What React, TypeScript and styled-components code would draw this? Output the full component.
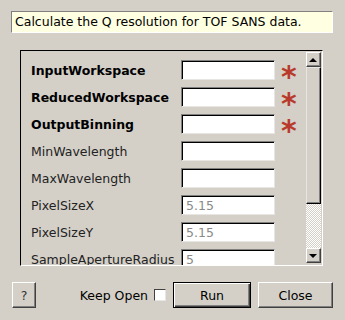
import styled, { createGlobalStyle } from "styled-components";

const Global = createGlobalStyle`
  body {
    margin: 0;
    background: #d4d0c8;
    font-family: "DejaVu Sans", "Liberation Sans", sans-serif;
    font-size: 12.5px;
    color: #000;
  }
`

const Dialog = styled.div`
  width: 345px;
  height: 320px;
  box-sizing: border-box;
  padding: 11px 12px 0 11px;
  display: flex;
  flex-direction: column;
`

const Description = styled.div`
  height: 22px;
  box-sizing: border-box;
  background: #ffffe1;
  border: 1px solid;
  border-color: #808080 #fff #fff #808080;
  padding: 2px 0 0 3px;
  line-height: 16px;
  white-space: nowrap;
`

const Frame = styled.div`
  margin: 17px 10px 0 9px;
  height: 216px;
  box-sizing: border-box;
  border: 1px solid;
  border-color: #000 #fff #fff #000;
  display: flex;
  overflow: hidden;
`

const Rows = styled.div`
  flex: 1;
  padding: 9px 0 0 10px;
  display: flex;
  flex-direction: column;
  gap: 7px;
`

const Row = styled.div`
  display: flex;
  align-items: center;
  height: 20px;
  flex-shrink: 0;
`

const Label = styled.span<{ $required?: boolean }>`
  width: 150px;
  font-weight: ${p => (p.$required ? "bold" : "normal")};
  color: ${p => (p.$required ? "#000" : "#222")};
  white-space: nowrap;
`

const Input = styled.div`
  width: 94px;
  height: 20px;
  box-sizing: border-box;
  background: #fff;
  border: 1px solid;
  border-color: #808080 #e8e6e2 #e8e6e2 #808080;
  box-shadow: inset 1px 1px 0 #000;
  color: #8a8a8a;
  padding: 1px 0 0 4px;
  line-height: 17px;
`

const Star = styled.span`
  width: 17px;
  margin-left: 6px;
  height: 20px;
  color: #b83a2b;
  font-weight: bold;
  font-size: 30px;
  line-height: 20px;
  padding-top: 7px;
  box-sizing: border-box;
`

const Scrollbar = styled.div`
  width: 15px;
  margin: 1px 1px 2px 0;
  display: flex;
  flex-direction: column;
`

const ScrollButton = styled.div`
  height: 15px;
  box-sizing: border-box;
  background: #d4d0c8;
  border: 1px solid;
  border-color: #fff #404040 #404040 #fff;
  box-shadow: inset -1px -1px 0 #808080;
  display: flex;
  align-items: center;
  justify-content: center;
`

const Arrow = styled.span<{ $down?: boolean }>`
  width: 0;
  height: 0;
  border-left: 4px solid transparent;
  border-right: 4px solid transparent;
  border-bottom: ${p => (p.$down ? "none" : "4px solid #000")};
  border-top: ${p => (p.$down ? "4px solid #000" : "none")};
  margin-right: 1px;
`

const Thumb = styled.div`
  height: 137px;
  box-sizing: border-box;
  border: 1px solid;
  border-color: #e8e6e2 #000 #000 #e8e6e2;
  box-shadow: inset -1px -1px 0 #808080;
`

const Trough = styled.div`
  flex: 1;
  background: repeating-conic-gradient(#d4d0c8 0 25%, #fff 0 50%) 0 0 / 2px 2px;
`

const Footer = styled.div`
  margin-top: 16px;
  display: flex;
  align-items: center;
  height: 26px;
`

const Button = styled.button<{ $default?: boolean; $width: number }>`
  width: ${p => p.$width}px;
  height: 26px;
  box-sizing: border-box;
  background: #d4d0c8;
  font-family: inherit;
  font-size: 12.5px;
  color: #000;
  padding: 0;
  border: 1px solid;
  border-color: ${p => (p.$default ? "#000" : "#fff #404040 #404040 #fff")};
  box-shadow: ${p =>
    p.$default
      ? "inset 1px 1px 0 #fff, inset -1px -1px 0 #404040, inset -2px -2px 0 #808080"
      : "inset -1px -1px 0 #808080"};
`

const HelpButton = styled(Button)`
  margin-left: 1px;
  color: #333;
`

const CloseButton = styled(Button)`
  margin-left: 7px;
`

const KeepOpen = styled.label`
  margin-left: auto;
  display: flex;
  align-items: center;
  gap: 6px;
  margin-right: 7px;
`

const Check = styled.span`
  width: 12px;
  height: 12px;
  box-sizing: border-box;
  background: #fff;
  border: 1px solid;
  border-color: #404040 #e8e6e2 #e8e6e2 #404040;
`

const fields = [
  { name: "InputWorkspace", required: true },
  { name: "ReducedWorkspace", required: true },
  { name: "OutputBinning", required: true },
  { name: "MinWavelength" },
  { name: "MaxWavelength" },
  { name: "PixelSizeX", value: "5.15" },
  { name: "PixelSizeY", value: "5.15" },
  { name: "SampleApertureRadius", value: "5" },
]

export default function App(): JSX.Element {
  return (
    <Dialog>
      <Global />
      <Description>Calculate the Q resolution for TOF SANS data.</Description>
      <Frame>
        <Rows>
          {fields.map(f => (
            <Row key={f.name}>
              <Label $required={f.required}>{f.name}</Label>
              <Input>{f.value}</Input>
              {f.required && <Star>*</Star>}
            </Row>
          ))}
        </Rows>
        <Scrollbar>
          <ScrollButton><Arrow /></ScrollButton>
          <Thumb />
          <Trough />
          <ScrollButton><Arrow $down /></ScrollButton>
        </Scrollbar>
      </Frame>
      <Footer>
        <HelpButton $width={24}>?</HelpButton>
        <KeepOpen>Keep Open <Check /></KeepOpen>
        <Button $default $width={78}>Run</Button>
        <CloseButton $width={75}>Close</CloseButton>
      </Footer>
    </Dialog>
  )
}
